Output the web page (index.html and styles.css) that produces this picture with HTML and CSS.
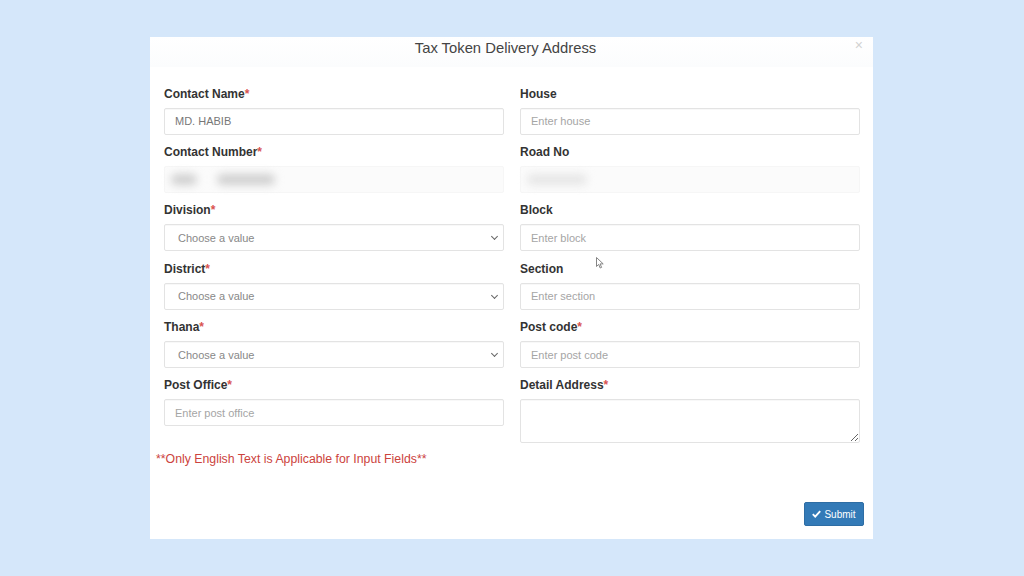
FILE: index.html
```html
<!DOCTYPE html>
<html lang="en">
<head>
    <meta charset="UTF-8">
    <meta name="viewport" content="width=device-width, initial-scale=1.0">
    <title>Tax Token Delivery Address</title>
    <link rel="stylesheet" href="styles.css">
</head>
<body>
    <div class="modal">
        <div class="modal-header">
            <h4>Tax Token Delivery Address</h4>
            <span class="close">&times;</span>
        </div>
        <form class="modal-body">
            <div class="form-grid">
                <div class="form-group">
                    <label>Contact Name<span class="req">*</span></label>
                    <input type="text" value="MD. HABIB">
                </div>
                <div class="form-group">
                    <label>House</label>
                    <input type="text" placeholder="Enter house">
                </div>
                <div class="form-group">
                    <label>Contact Number<span class="req">*</span></label>
                    <div class="blurred">
                        <span class="blob short"></span>
                        <span class="blob long"></span>
                    </div>
                </div>
                <div class="form-group">
                    <label>Road No</label>
                    <div class="blurred">
                        <span class="blob faint"></span>
                    </div>
                </div>
                <div class="form-group">
                    <label>Division<span class="req">*</span></label>
                    <div class="select-wrap">
                        <select><option>Choose a value</option></select>
                    </div>
                </div>
                <div class="form-group">
                    <label>Block</label>
                    <input type="text" placeholder="Enter block">
                </div>
                <div class="form-group">
                    <label>District<span class="req">*</span></label>
                    <div class="select-wrap">
                        <select><option>Choose a value</option></select>
                    </div>
                </div>
                <div class="form-group">
                    <label>Section</label>
                    <input type="text" placeholder="Enter section">
                    <svg class="cursor" width="8" height="12" viewBox="0 0 8 12">
                        <path d="M0.5 0.5 L0.5 9.5 L2.7 7.4 L4.2 11 L5.6 10.4 L4.1 6.9 L7.2 6.9 Z" fill="#fff" stroke="#777" stroke-width="0.9"/>
                    </svg>
                </div>
                <div class="form-group">
                    <label>Thana<span class="req">*</span></label>
                    <div class="select-wrap">
                        <select><option>Choose a value</option></select>
                    </div>
                </div>
                <div class="form-group">
                    <label>Post code<span class="req">*</span></label>
                    <input type="text" placeholder="Enter post code">
                </div>
                <div class="form-group">
                    <label>Post Office<span class="req">*</span></label>
                    <input type="text" placeholder="Enter post office">
                </div>
                <div class="form-group">
                    <label>Detail Address<span class="req">*</span></label>
                    <textarea></textarea>
                </div>
            </div>
            <p class="note">**Only English Text is Applicable for Input Fields**</p>
            <div class="modal-footer">
                <button type="button" class="btn-submit">
                    <svg width="9" height="8" viewBox="0 0 9 8">
                        <path d="M0.8 4.2 L3.2 6.6 L8.2 1.2" fill="none" stroke="#fff" stroke-width="1.9"/>
                    </svg>
                    Submit
                </button>
            </div>
        </form>
    </div>
</body>
</html>
```

FILE: styles.css
```css
body {
    margin: 0;
    padding-top: 37px;
    background-color: #d5e7fa;
    font-family: "Liberation Sans", Arial, sans-serif;
    color: #333;
}
.modal {
    width: 723px;
    height: 502px;
    margin-left: 150px;
    background-color: #fff;
    box-sizing: border-box;
}
.modal-header {
    position: relative;
    height: 30px;
    padding-top: 2px;
    padding-right: 12px;
    box-sizing: border-box;
    background: linear-gradient(#fff, #fbfcfd);
}
.modal-header h4 {
    margin: 0;
    text-align: center;
    font-size: 14.8px;
    font-weight: normal;
    line-height: 18px;
    color: #444;
}
.close {
    position: absolute;
    right: 10px;
    top: 0;
    font-size: 14px;
    color: #d2d2d2;
}
.modal-body {
    padding: 19.5px 13px 0 14px;
}
.form-grid {
    display: grid;
    grid-template-columns: 340px 340px;
    column-gap: 16px;
    row-gap: 10.4px;
}
.form-group {
    display: flex;
    flex-direction: column;
    position: relative;
}
label {
    font-size: 12px;
    font-weight: bold;
    line-height: 15px;
    margin-bottom: 6px;
    color: #333;
}
.req {
    color: #d9534f;
}
input, select, textarea, .blurred {
    height: 27px;
    box-sizing: border-box;
    border: 1px solid #e3e3e3;
    border-radius: 2px;
    padding: 0 10px;
    font-family: "Liberation Sans", Arial, sans-serif;
    font-size: 11px;
    color: #777;
    background-color: #fff;
    box-shadow: inset 0 1px 1px rgba(0,0,0,0.03);
}
input::placeholder {
    color: #a5a5a5;
}
.select-wrap {
    position: relative;
}
select {
    width: 100%;
    appearance: none;
    color: #888;
    padding-left: 13px;
}
.select-wrap::after {
    content: "";
    position: absolute;
    right: 7px;
    top: 10px;
    width: 4px;
    height: 4px;
    border-right: 1px solid #666;
    border-bottom: 1px solid #666;
    transform: rotate(45deg);
}
textarea {
    height: 44px;
    resize: vertical;
}
.blurred {
    border-color: #f6f6f6;
    background-color: #fbfbfb;
    display: flex;
    align-items: center;
    gap: 20px;
    padding-left: 6px;
    box-shadow: none;
}
.blob {
    height: 11px;
    border-radius: 6px;
    background-color: #cfcfcf;
    filter: blur(4px);
}
.blob.short {
    width: 26px;
}
.blob.long {
    width: 58px;
}
.blob.faint {
    width: 60px;
    background-color: #e6e6e6;
}
.cursor {
    position: absolute;
    left: 76px;
    top: -5px;
}
.note {
    margin: 9px 0 0 -8px;
    font-size: 12.3px;
    line-height: 15px;
    color: #cc433d;
}
.modal-footer {
    display: flex;
    justify-content: flex-end;
    margin-top: 35px;
    margin-right: -4px;
}
.btn-submit {
    display: flex;
    align-items: center;
    gap: 3px;
    height: 24px;
    width: 60px;
    justify-content: center;
    padding: 0;
    background-color: #337ab7;
    border: 1px solid #2e6da4;
    border-radius: 2px;
    color: #fff;
    font-family: "Liberation Sans", Arial, sans-serif;
    font-size: 10px;
}
```
